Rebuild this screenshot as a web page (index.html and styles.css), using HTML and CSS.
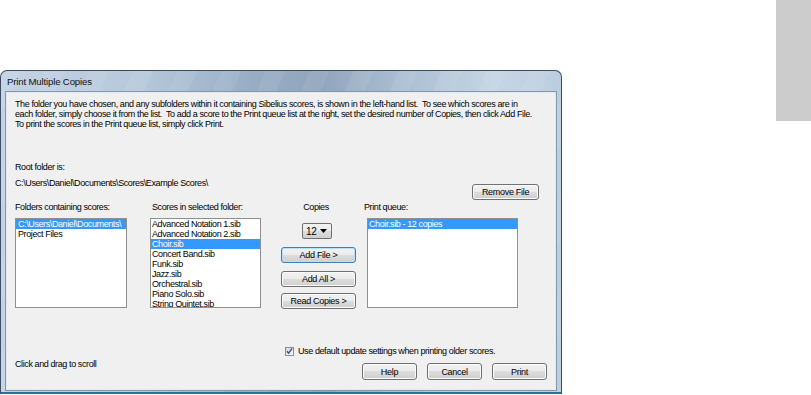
FILE: index.html
```html
<!DOCTYPE html>
<html lang="en">
<head>
    <meta charset="utf-8">
    <title>Print Multiple Copies</title>
    <link rel="stylesheet" href="styles.css">
</head>
<body>
    <div class="window">
        <div class="titlebar">Print Multiple Copies</div>
        <div class="client">
            <p class="intro">
                The folder you have chosen, and any subfolders within it containing Sibelius scores, is shown in the left-hand list.&nbsp; To see which scores are in<br>
                each folder, simply choose it from the list.&nbsp; To add a score to the Print queue list at the right, set the desired number of Copies, then click Add File.<br>
                To print the scores in the Print queue list, simply click Print.
            </p>

            <div class="root-row">
                <div class="root-info">
                    <div>Root folder is:</div>
                    <div class="root-path">C:\Users\Daniel\Documents\Scores\Example Scores\</div>
                </div>
                <button class="btn btn-remove">Remove File</button>
            </div>

            <div class="columns">
                <div class="col col-folders">
                    <div class="label">Folders containing scores:</div>
                    <ul class="listbox">
                        <li class="selected">C:\Users\Daniel\Documents\</li>
                        <li>Project Files</li>
                    </ul>
                </div>
                <div class="col col-scores">
                    <div class="label">Scores in selected folder:</div>
                    <ul class="listbox">
                        <li>Advanced Notation 1.sib</li>
                        <li>Advanced Notation 2.sib</li>
                        <li class="selected">Choir.sib</li>
                        <li>Concert Band.sib</li>
                        <li>Funk.sib</li>
                        <li>Jazz.sib</li>
                        <li>Orchestral.sib</li>
                        <li>Piano Solo.sib</li>
                        <li>String Quintet.sib</li>
                    </ul>
                </div>
                <div class="col col-actions">
                    <div class="label label-copies">Copies</div>
                    <div class="dropdown">
                        <span>12</span>
                        <svg width="7" height="4" viewBox="0 0 7 4"><path d="M0 0h7L3.5 4z" fill="#000"/></svg>
                    </div>
                    <button class="btn btn-wide btn-focus">Add File &gt;</button>
                    <button class="btn btn-wide btn-all">Add All &gt;</button>
                    <button class="btn btn-wide btn-read">Read Copies &gt;</button>
                </div>
                <div class="col col-queue">
                    <div class="label">Print queue:</div>
                    <ul class="listbox">
                        <li class="selected">Choir.sib - 12 copies</li>
                    </ul>
                </div>
            </div>

            <label class="check-row">
                <span class="checkbox">
                    <svg width="8" height="8" viewBox="0 0 8 8"><path d="M1 4.2l2 2.3L7 1" fill="none" stroke="#3a4f8c" stroke-width="1.6"/></svg>
                </span>
                Use default update settings when printing older scores.
            </label>

            <div class="bottom-row">
                <div class="hint">Click and drag to scroll</div>
                <div class="actions">
                    <button class="btn btn-dialog">Help</button>
                    <button class="btn btn-dialog">Cancel</button>
                    <button class="btn btn-dialog">Print</button>
                </div>
            </div>
        </div>
    </div>
    <div class="side-bar"></div>
</body>
</html>
```

FILE: styles.css
```css
:root {
--clr-face: #f0f0f0;
--clr-select: #3399ff;
--clr-list-border: #8e8f8f;
--clr-btn-border: #707070;
}
body {
    margin: 0;
    width: 811px;
    height: 395px;
    overflow: hidden;
    background-color: #fff;
    font-family: "Liberation Sans", Arial, sans-serif;
    font-size: 9px;
    letter-spacing: -0.4px;
    color: #000;
    display: flex;
    align-items: flex-start;
}
.window {
    width: 562px;
    height: 324px;
    margin-top: 70px;
    box-sizing: border-box;
    border: 1px solid #3e4d5e;
    border-bottom: 2px solid #2b7191;
    border-radius: 7px 7px 0 0;
    padding: 0 5px 2px 5px;
    display: flex;
    flex-direction: column;
    background:
        repeating-linear-gradient(115deg, rgba(255, 255, 255, 0.07) 0 18px, rgba(255, 255, 255, 0) 18px 40px),
        linear-gradient(90deg, #c3d3e4 0%, #b6c8db 25%, #97adc4 45%, #8fa5bc 57%, #abbfd3 72%, #c5d5e5 88%, #bccddf 100%);
}
.titlebar {
    height: 21px;
    flex: none;
    display: flex;
    align-items: center;
    padding-left: 1px;
    font-size: 9.6px;
    letter-spacing: -0.15px;
    color: #111;
}
.client {
    flex: 1;
    background-color: var(--clr-face);
    border: 1px solid #e3e9f0;
    box-shadow: 0 0 0 1px #8497ad;
    padding: 6px 8px 0 8px;
    overflow: hidden;
}
.intro {
    margin: 0;
    line-height: 10px;
    white-space: nowrap;
}
.root-row {
    margin-top: 33px;
    display: flex;
    justify-content: space-between;
    align-items: flex-start;
    line-height: 10px;
}
.root-path {
    margin-top: 6px;
}
.btn {
    font-family: inherit;
    font-size: 9px;
    letter-spacing: -0.3px;
    color: #000;
    height: 16px;
    padding: 0;
    border: 1px solid var(--clr-btn-border);
    border-radius: 3px;
    background: linear-gradient(#f2f2f2 0%, #ebebeb 50%, #dddddd 50%, #cfcfcf 100%);
    box-shadow: inset 0 0 0 1px #fbfbfb;
    line-height: 12px;
}
.btn-remove {
    width: 67px;
    margin-top: 22px;
    margin-right: 8px;
}
.columns {
    margin-top: 2px;
    display: flex;
    align-items: flex-start;
}
.label {
    line-height: 10px;
    height: 10px;
    white-space: nowrap;
}
.col-folders {
    width: 112px;
}
.col-scores {
    width: 111px;
    margin-left: 23px;
}
.col-scores .label {
    padding-left: 2px;
}
.col-actions {
    width: 75px;
    margin-left: 20px;
    display: flex;
    flex-direction: column;
}
.label-copies {
    text-align: center;
    margin-left: 22px;
    width: 26px;
}
.col-queue {
    width: 151px;
    margin-left: 11px;
}
.col-queue .label {
    margin-left: -3px;
}
.listbox {
    list-style: none;
    margin: 6px 0 0 0;
    padding: 0;
    height: 90px;
    box-sizing: border-box;
    border: 1px solid var(--clr-list-border);
    background-color: #fff;
    overflow: hidden;
}
.listbox li {
    height: 10px;
    line-height: 10px;
    padding-left: 1px;
    white-space: nowrap;
    overflow: hidden;
}
.col-folders .listbox li {
    padding-left: 2px;
}
.listbox li.selected {
    background-color: var(--clr-select);
    color: #fff;
}
.dropdown {
    margin: 11px 0 0 21px;
    width: 30px;
    height: 16px;
    box-sizing: border-box;
    border: 1px solid var(--clr-btn-border);
    border-radius: 2px;
    background: linear-gradient(#f2f2f2 0%, #ebebeb 50%, #dddddd 50%, #cfcfcf 100%);
    display: flex;
    align-items: center;
    justify-content: space-between;
    padding: 0 4px 0 3px;
    font-size: 10px;
}
.btn-wide {
    width: 75px;
}
.btn-focus {
    margin-top: 8px;
    border-color: #3c7fb1;
    box-shadow: inset 0 0 0 1px #b6e0f7;
}
.btn-all {
    margin-top: 8px;
}
.btn-read {
    margin-top: 6px;
}
.check-row {
    margin: 37px 0 0 270px;
    height: 10px;
    display: flex;
    align-items: center;
    gap: 4px;
    white-space: nowrap;
}
.checkbox {
    width: 9px;
    height: 9px;
    box-sizing: border-box;
    border: 1px solid #8f8f8f;
    background: linear-gradient(135deg, #d8d8d8, #f8f8f8);
    display: flex;
    align-items: center;
    justify-content: center;
}
.bottom-row {
    margin-top: 3px;
    display: flex;
    justify-content: space-between;
    align-items: flex-start;
}
.hint {
    line-height: 10px;
}
.actions {
    display: flex;
    gap: 10px;
    margin-top: 4px;
}
.btn-dialog {
    width: 55px;
    height: 17px;
}
.side-bar {
    width: 35px;
    height: 121px;
    margin-left: auto;
    background-color: #cccccc;
}
```
